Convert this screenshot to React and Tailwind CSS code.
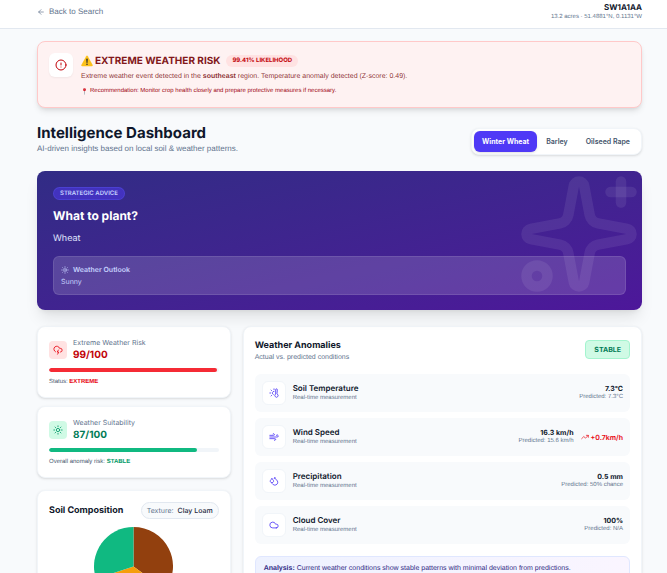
import React, { useState } from 'react';
import {
  ArrowLeft,
  CircleAlert,
  Cloud,
  CloudLightning,
  Droplets,
  Sparkles,
  Sun,
  ThermometerSun,
  TrendingUp,
  Wind,
} from 'lucide-react';

const crops = ['Winter Wheat', 'Barley', 'Oilseed Rape'];

const anomalies = [
  { name: 'Soil Temperature', icon: ThermometerSun, value: '7.3°C', predicted: '7.3°C' },
  { name: 'Wind Speed', icon: Wind, value: '16.3 km/h', predicted: '15.6 km/h', delta: '+0.7km/h' },
  { name: 'Precipitation', icon: Droplets, value: '0.5 mm', predicted: '50% chance' },
  { name: 'Cloud Cover', icon: Cloud, value: '100%', predicted: 'N/A' },
];

const soil = [
  { name: 'Clay', share: 35, color: '#92400e' },
  { name: 'Sand', share: 35, color: '#f59e0b' },
  { name: 'Silt', share: 30, color: '#10b981' },
];

const WarningSign = () => (
  <svg viewBox="0 0 24 24" className="size-3 shrink-0" aria-hidden="true">
    <path d="M10.3 2.6a2 2 0 0 1 3.4 0l9.4 17a2 2 0 0 1-1.7 2.9H2.6a2 2 0 0 1-1.7-2.9z" fill="#fcc21b" />
    <path d="M10.4 8.6a1.6 1.6 0 0 1 3.2 0l-.6 6.4a1 1 0 0 1-2 0z" fill="#2f2f2f" />
    <circle cx="12" cy="18.6" r="1.6" fill="#2f2f2f" />
  </svg>
);

const Pin = () => (
  <svg viewBox="0 0 24 24" className="size-[7px] shrink-0" aria-hidden="true">
    <path d="M10.8 11h2.4l-.5 12h-1.4z" fill="#78909c" />
    <circle cx="12" cy="6" r="5" fill="#d5232f" />
    <circle cx="10.4" cy="4.4" r="1.4" fill="#f58b8b" />
  </svg>
);

const slicePath = (start, share) => {
  const point = (pct) => {
    const angle = (pct / 100) * 2 * Math.PI;
    return `${50 + 50 * Math.sin(angle)} ${50 - 50 * Math.cos(angle)}`;
  };
  return `M50 50 L${point(start)} A50 50 0 0 1 ${point(start + share)} Z`;
};

const SoilPie = () => {
  let start = 0;
  return (
    <svg viewBox="0 0 100 100" className="size-[79px]" role="img" aria-label="Soil composition">
      {soil.map((part) => {
        const d = slicePath(start, part.share);
        start += part.share;
        return <path key={part.name} d={d} fill={part.color} />;
      })}
    </svg>
  );
};

const Header = () => (
  <header className="flex items-start justify-between border-b border-slate-200 bg-white pt-[2px] pr-[25px] pb-[6px] pl-[37px]">
    <a href="#search" className="flex items-center gap-1 font-['Liberation_Sans',sans-serif] text-[8px] leading-5 text-slate-500">
      <ArrowLeft className="size-2" />
      Back to Search
    </a>
    <div className="text-right">
      <p className="text-[8px] leading-[11px] font-bold text-slate-900">SW1A1AA</p>
      <p className="font-['Liberation_Sans',sans-serif] text-[6px] leading-[9px] text-slate-500">
        13.2 acres · 51.4881°N, 0.1131°W
      </p>
    </div>
  </header>
);

const RiskAlert = () => (
  <section className="flex items-start gap-2 rounded-lg border border-red-200 bg-red-50 px-[11px] pt-[11px] pb-[9px] shadow-md">
    <div className="flex size-6 shrink-0 items-center justify-center rounded-md bg-white text-red-700 shadow-xs">
      <CircleAlert className="size-3" />
    </div>
    <div>
      <div className="flex items-center gap-[6px]">
        <h2 className="flex items-center gap-[2px] text-[10px] leading-4 font-bold text-red-900">
          <WarningSign />
          EXTREME WEATHER RISK
        </h2>
        <span className="rounded-full bg-red-100 px-[6px] text-[6px] leading-3 font-bold text-red-700">
          99.41% LIKELIHOOD
        </span>
      </div>
      <p className="font-['Liberation_Sans',sans-serif] text-[7px] leading-[15px] text-red-900/90">
        Extreme weather event detected in the <strong>southeast</strong> region. Temperature anomaly detected
        (Z-score: 0.49).
      </p>
      <p className="flex items-center gap-[2px] font-['Liberation_Sans',sans-serif] text-[6px] leading-[14px] text-red-800">
        <Pin />
        Recommendation: Monitor crop health closely and prepare protective measures if necessary.
      </p>
    </div>
  </section>
);

const CropTabs = ({ crop, onSelect }) => (
  <div className="flex rounded-lg border border-slate-100 bg-white p-[2px] shadow-sm">
    {crops.map((name) => (
      <button
        key={name}
        type="button"
        onClick={() => onSelect(name)}
        className={
          name === crop
            ? 'rounded-md bg-indigo-600 px-2 text-[7px] leading-[21px] font-bold text-white shadow-sm'
            : 'rounded-md px-[9px] text-[7px] leading-[21px] font-semibold text-slate-600'
        }
      >
        {name}
      </button>
    ))}
  </div>
);

const Advice = () => (
  <section className="relative overflow-hidden rounded-lg bg-linear-to-br from-[#312c85] to-[#4d179a] px-4 pt-4 pb-[15px] text-white shadow-lg">
    <Sparkles className="absolute top-0 right-0 size-[126px] text-white/8" />
    <p className="w-fit rounded-full border border-indigo-500/30 bg-indigo-600/50 px-[6px] text-[6px] leading-[11px] font-semibold text-indigo-200">
      STRATEGIC ADVICE
    </p>
    <h2 className="mt-2 text-xs leading-4 font-bold">What to plant?</h2>
    <p className="mt-2 text-[9px] leading-[14px] text-indigo-100">Wheat</p>
    <div className="mt-[10px] rounded-md border border-white/10 bg-white/15 px-[7px] pt-[7px] pb-[6px] text-indigo-200">
      <h3 className="flex items-center gap-1 text-[7px] leading-3 font-semibold">
        <Sun className="size-2" />
        Weather Outlook
      </h3>
      <p className="text-[7px] leading-3">Sunny</p>
    </div>
  </section>
);

const RiskScore = () => (
  <section className="rounded-lg border border-slate-100 bg-white px-[11px] pt-[11px] pb-[10px] shadow-sm">
    <div className="flex items-center gap-[6px]">
      <div className="flex size-[18px] items-center justify-center rounded-sm bg-red-100 text-red-600">
        <CloudLightning className="size-[10px]" />
      </div>
      <div>
        <h3 className="text-[7px] leading-[10px] text-slate-500">Extreme Weather Risk</h3>
        <p className="text-[10px] leading-[14px] font-bold text-red-700">99/100</p>
      </div>
    </div>
    <div className="mt-[6px] h-1 overflow-hidden rounded-full bg-slate-100">
      <div className="h-full rounded-full bg-[#f52b35]" style={{ width: '99%' }} />
    </div>
    <p className="mt-[5px] font-['Liberation_Sans',sans-serif] text-[6px] leading-[10px] text-slate-600">
      Status: <strong className="text-red-600">EXTREME</strong>
    </p>
  </section>
);

const SuitabilityScore = () => (
  <section className="rounded-lg border border-slate-100 bg-white px-[11px] pt-[11px] pb-[10px] shadow-sm">
    <div className="flex items-center gap-[6px]">
      <div className="flex size-[18px] items-center justify-center rounded-sm bg-emerald-100 text-emerald-600">
        <Sun className="size-[10px]" />
      </div>
      <div>
        <h3 className="text-[7px] leading-[10px] text-slate-500">Weather Suitability</h3>
        <p className="text-[10px] leading-[14px] font-bold text-emerald-700">87/100</p>
      </div>
    </div>
    <div className="mt-[6px] h-1 overflow-hidden rounded-full bg-slate-100">
      <div className="h-full rounded-full bg-[#10b981]" style={{ width: '87%' }} />
    </div>
    <p className="mt-[5px] font-['Liberation_Sans',sans-serif] text-[6px] leading-[10px] text-slate-600">
      Overall anomaly risk: <strong className="text-emerald-600">STABLE</strong>
    </p>
  </section>
);

const SoilCard = () => (
  <section className="rounded-lg border border-slate-100 bg-white px-[11px] py-[11px] shadow-sm">
    <div className="flex items-center justify-between">
      <h2 className="text-[9px] leading-4 font-bold text-slate-900">Soil Composition</h2>
      <span className="rounded-full border border-slate-200 bg-slate-50 px-[5px] text-[7px] leading-[15px] text-slate-500">
        Texture: <span className="ml-[2px] font-medium text-slate-800">Clay Loam</span>
      </span>
    </div>
    <div className="mt-2 flex justify-center">
      <SoilPie />
    </div>
  </section>
);

const AnomalyRow = ({ name, icon: Icon, value, predicted, delta }) => (
  <li className="flex items-center gap-[7px] rounded-md bg-slate-50 px-[7px] py-[7px]">
    <div className="flex size-6 shrink-0 items-center justify-center rounded-md border border-slate-100 bg-white text-indigo-600">
      <Icon className="size-[10px]" />
    </div>
    <div className="flex-1">
      <h3 className="text-[8px] leading-[11px] font-semibold text-slate-900">{name}</h3>
      <p className="font-['Liberation_Sans',sans-serif] text-[6px] leading-[9px] text-slate-500">
        Real-time measurement
      </p>
    </div>
    <div className="text-right">
      <p className="text-[7px] leading-[9px] font-bold text-slate-900">{value}</p>
      <p className="font-['Liberation_Sans',sans-serif] text-[6px] leading-[9px] text-slate-500">
        Predicted: {predicted}
      </p>
    </div>
    {delta && (
      <p className="flex items-center gap-[2px] text-[7px] leading-[9px] font-semibold text-red-600">
        <TrendingUp className="size-2" />
        {delta}
      </p>
    )}
  </li>
);

const Anomalies = () => (
  <section className="col-span-2 rounded-lg border border-slate-100 bg-white px-[11px] py-[13px] shadow-sm">
    <div className="flex items-start justify-between">
      <div>
        <h2 className="text-[9px] leading-3 font-bold text-slate-900">Weather Anomalies</h2>
        <p className="font-['Liberation_Sans',sans-serif] text-[7px] leading-[11px] text-slate-500">
          Actual vs. predicted conditions
        </p>
      </div>
      <span className="rounded-sm border border-emerald-200 bg-emerald-100 px-2 text-[7px] leading-[17px] font-bold text-emerald-700">
        STABLE
      </span>
    </div>
    <ul className="mt-[11px] flex flex-col gap-[6px]">
      {anomalies.map((row) => (
        <AnomalyRow key={row.name} {...row} />
      ))}
    </ul>
    <p className="mt-3 rounded-md border border-indigo-100 bg-linear-to-r from-indigo-50 to-purple-50 px-2 py-[7px] font-['Liberation_Sans',sans-serif] text-[7px] leading-[10px] text-indigo-900">
      <strong>Analysis:</strong> Current weather conditions show stable patterns with minimal deviation from
      predictions.
    </p>
  </section>
);

function App() {
  const [crop, setCrop] = useState('Winter Wheat');

  return (
    <div className="min-h-screen bg-slate-50 font-['Inter',sans-serif] [text-rendering:geometricPrecision]">
      <Header />
      <main className="pt-3 pr-[25px] pb-3 pl-[37px]">
        <RiskAlert />
        <div className="mt-[15px] mb-4 flex items-end justify-between">
          <div>
            <h1 className="text-[15px] leading-5 font-bold text-slate-900">Intelligence Dashboard</h1>
            <p className="font-['Liberation_Sans',sans-serif] text-[8px] leading-3 text-slate-500">
              AI-driven insights based on local soil &amp; weather patterns.
            </p>
          </div>
          <CropTabs crop={crop} onSelect={setCrop} />
        </div>
        <Advice />
        <div className="mt-4 grid grid-cols-3 gap-3">
          <div className="flex flex-col gap-3">
            <div className="flex flex-col gap-2">
              <RiskScore />
              <SuitabilityScore />
            </div>
            <SoilCard />
          </div>
          <Anomalies />
        </div>
      </main>
    </div>
  );
}

export default App;
